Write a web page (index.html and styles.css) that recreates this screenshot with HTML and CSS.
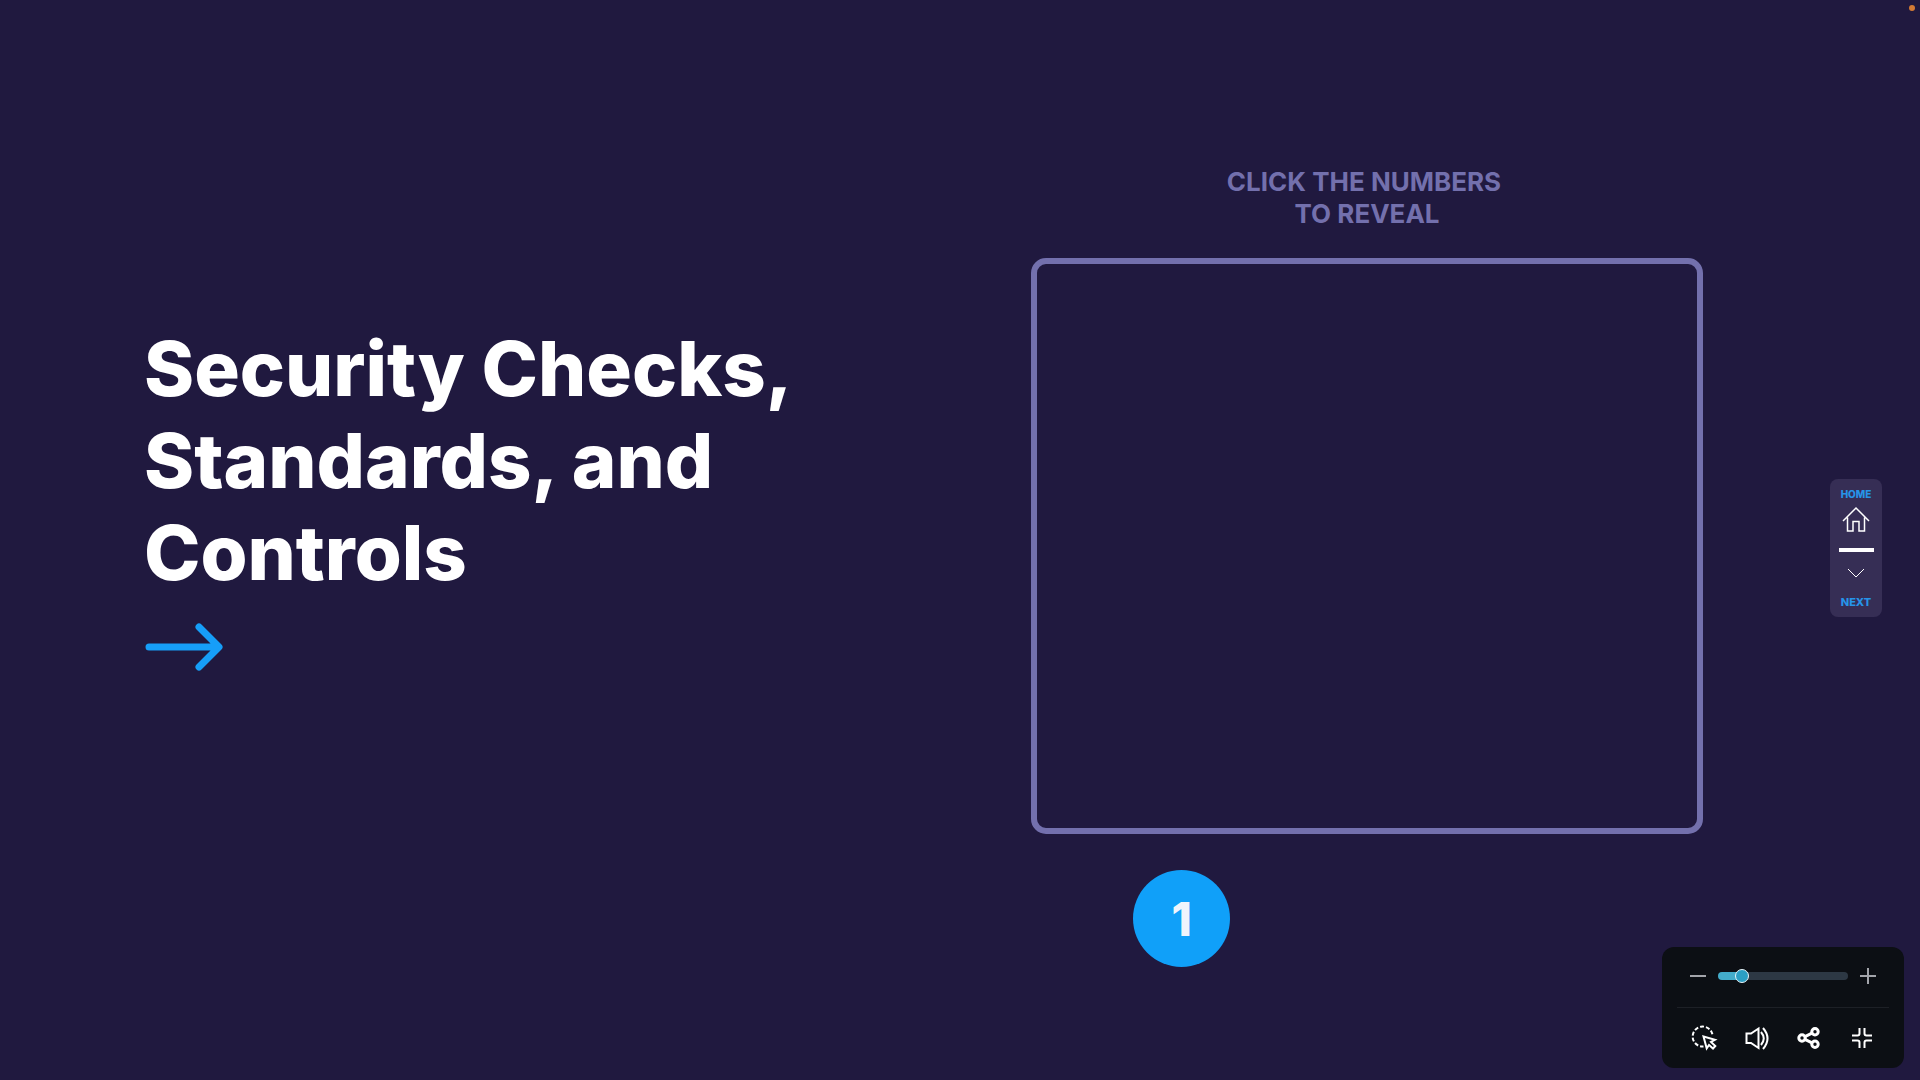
FILE: index.html
```html
<!DOCTYPE html>
<html lang="en">
<head>
<meta charset="utf-8">
<meta name="viewport" content="width=device-width, initial-scale=1">
<title>Security Checks, Standards, and Controls</title>
<link rel="stylesheet" href="styles.css">
</head>
<body>
<main class="slide">
  <section class="intro">
    <h1 class="title">Security Checks, Standards, and Controls</h1>
    <svg class="arrow" viewBox="0 0 80 50" aria-hidden="true"><path d="M5 25H74M55 5L75 25L55 45"/></svg>
  </section>
  <section class="reveal">
    <p class="prompt">CLICK THE NUMBERS&nbsp;<br>TO REVEAL</p>
    <div class="frame"></div>
    <div class="numbers"><button class="number" type="button">1</button></div>
  </section>
</main>

<nav class="side-nav" aria-label="Slides">
  <a class="side-link" href="#home">
    <span class="home-label">HOME</span>
    <svg class="home-icon" viewBox="0 0 28 26" aria-hidden="true"><path d="M1 15L14 2L27 15M5.500 11.500V25H11V15.500H17V25H22.500V11.500"/></svg>
  </a>
  <span class="side-bar"></span>
  <a class="side-link" href="#next">
    <svg class="next-icon" viewBox="0 0 18 10" aria-hidden="true"><path d="M1 1L9 9L17 1"/></svg>
    <span class="next-label">NEXT</span>
  </a>
</nav>

<span class="status-dot"></span>

<aside class="player" aria-label="Player controls">
  <div class="zoom-row">
    <button class="step" type="button" aria-label="Zoom out"><svg viewBox="0 0 20 20"><path d="M2 10H18"/></svg></button>
    <input class="zoom" type="range" min="0" max="100" value="15" aria-label="Zoom">
    <button class="step" type="button" aria-label="Zoom in"><svg viewBox="0 0 20 20"><path d="M2 10H18M10 2V18"/></svg></button>
  </div>
  <div class="tool-row">
    <button class="tool" type="button" aria-label="Select">
      <svg viewBox="0 0 28 28"><path stroke-dasharray="4 2" d="M22.400 10.300A10 10 0 1 0 13.500 22.500"/><path d="M13.500 12.500L25 15.700L21 18L25.300 22L23 24.500L19 21L16.700 24.300Z"/></svg>
    </button>
    <button class="tool" type="button" aria-label="Sound">
      <svg viewBox="0 0 28 28"><path d="M3.500 9.500H8L15.500 4.500V24L8 19H3.500ZM18 8Q23.500 14.500 18 21M20 4Q29 14.500 20 25"/></svg>
    </button>
    <button class="tool" type="button" aria-label="Share">
      <svg class="bold" viewBox="0 0 28 28"><circle cx="7" cy="14" r="3.200"/><circle cx="20" cy="7.700" r="3.200"/><circle cx="20" cy="20.300" r="3.200"/><path d="M10 12.600L17 9.200M10 15.400L17 18.800"/></svg>
    </button>
    <button class="tool" type="button" aria-label="Exit full screen">
      <svg viewBox="0 0 28 28"><path d="M4 11.500H9.500Q11.500 11.500 11.500 9.500V4M16.500 4V9.500Q16.500 11.500 18.500 11.500H24M24 16.500H18.500Q16.500 16.500 16.500 18.500V24M11.500 24V18.500Q11.500 16.500 9.500 16.500H4"/></svg>
    </button>
  </div>
</aside>
</body>
</html>
```
FILE: styles.css
```css
* { box-sizing: border-box; }

body {
  margin: 0;
  background: #20193f;
  color: #fff;
  font-family: Inter, "Liberation Sans", sans-serif;
}

button {
  border: 0;
  padding: 0;
  background: none;
  color: inherit;
  font: inherit;
  cursor: pointer;
}

svg {
  display: block;
  fill: none;
  stroke: currentColor;
}

.slide {
  display: grid;
  grid-template-columns: 1fr 35vw;
  min-height: 100vh;
  padding: 166px 11.3vw 40px 7.5vw;
}

.intro { padding-top: 156px; }

.title {
  max-width: 720px;
  margin: 0;
  font-size: 76px;
  font-weight: 800;
  line-height: 92px;
}

.arrow {
  width: 80px;
  height: 50px;
  margin-top: 24px;
  color: #169ef8;
  stroke-width: 7;
  stroke-linecap: round;
  stroke-linejoin: round;
}

.prompt {
  margin: 0 0 28px;
  color: #7370ad;
  font-size: 26px;
  font-weight: 700;
  line-height: 32px;
  text-align: center;
}

.frame {
  aspect-ratio: 672 / 576;
  border: 6px solid #7370ad;
  border-radius: 15px;
}

.numbers {
  display: flex;
  padding: 36px 102px 0;
}

.number {
  width: 97px;
  height: 97px;
  border-radius: 50%;
  background: #10a0f9;
  color: #f0f4fc;
  font-size: 46px;
  font-weight: 800;
}

.side-nav {
  position: fixed;
  top: 479px;
  right: 38px;
  display: flex;
  flex-direction: column;
  align-items: center;
  gap: 16px;
  width: 52px;
  padding: 8px 0;
  border-radius: 8px;
  background: #362e55;
}

.side-link {
  display: flex;
  flex-direction: column;
  align-items: center;
  color: #2694e8;
  text-decoration: none;
}

.side-link svg { color: #fff; }

.home-label,
.next-label {
  font-size: 10px;
  font-weight: 800;
  line-height: 14px;
}

.next-label { font-size: 11px; }

.home-icon {
  width: 28px;
  height: 26px;
  margin-top: 5px;
  stroke-width: 1.5;
}

.side-bar {
  width: 35px;
  height: 4px;
  background: #fff;
}

.next-icon {
  width: 18px;
  height: 10px;
  margin-bottom: 17px;
}

.status-dot {
  position: fixed;
  top: 5px;
  right: 5px;
  width: 6px;
  height: 6px;
  border-radius: 50%;
  background: #d27a35;
}

.player {
  position: fixed;
  right: 16px;
  bottom: 12px;
  width: 242px;
  padding: 0 15px;
  border-radius: 12px;
  background: #0c0f14;
}

.zoom-row {
  display: flex;
  align-items: center;
  gap: 10px;
  height: 61px;
  padding: 0 11px 3px;
  border-bottom: 1px solid #1d2026;
}

.step {
  width: 20px;
  height: 20px;
  color: #a3a5ab;
}

.step svg { stroke-width: 2; }

.zoom {
  flex: 1;
  min-width: 0;
  height: 14px;
  margin: 0;
  appearance: none;
  background: none;
}

.zoom::-webkit-slider-runnable-track {
  height: 8px;
  border-radius: 4px;
  background: linear-gradient(to right, #43acca 18%, #2d3844 18%);
}

.zoom::-webkit-slider-thumb {
  appearance: none;
  width: 14px;
  height: 14px;
  margin-top: -3px;
  border: 1px solid #e8f4f8;
  border-radius: 50%;
  background: #2c9fc4;
}

.tool-row {
  display: flex;
  align-items: center;
  justify-content: space-between;
  height: 60px;
  padding: 0 13px;
}

.tool {
  width: 28px;
  height: 28px;
}

.tool svg { stroke-width: 2; }
.tool .bold { stroke-width: 3; }
```
